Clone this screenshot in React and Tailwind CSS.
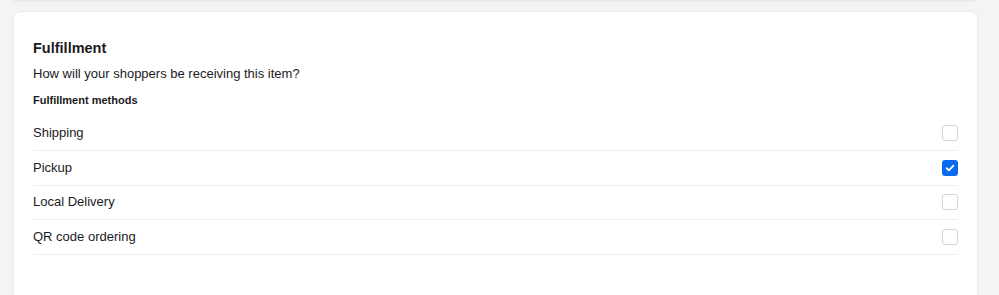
import React from "react";

const rows = [
  { label: "Shipping", checked: false, h: "h-[35px]" },
  { label: "Pickup", checked: true, h: "h-[35px]" },
  { label: "Local Delivery", checked: false, h: "h-[34px]" },
  { label: "QR code ordering", checked: false, h: "h-[35px]" },
];

function Box({ checked }) {
  if (checked) {
    return (
      <div className="w-4 h-4 rounded-[3px] bg-[#0b6bf0] flex items-center justify-center">
        <svg width="10" height="8" viewBox="0 0 10 8" fill="none">
          <path d="M1.6 4.3 L3.9 6.3 L8.4 1.6" stroke="white" strokeWidth="1.8" strokeLinecap="round" strokeLinejoin="round" />
        </svg>
      </div>
    );
  }
  return <div className="w-4 h-4 rounded-[3px] border-[1.5px] border-[#d3d5d8] bg-white" />;
}

export default function App() {
  return (
    <div className="w-[999px] h-[295px] bg-[#f3f4f6] overflow-hidden text-[#1a1b1d]" style={{ fontFamily: "'Liberation Sans', Arial, sans-serif" }}>
      <div className="ml-[14px] w-[961px] h-[2px] bg-[#e9eaec]" />
      <div className="ml-[14px] mt-[10px] w-[963px] h-[300px] bg-white rounded-[6px] shadow-[0_0_2px_rgba(0,0,0,0.12)] pl-[19px] pr-[19px] pt-[27px]">
        <div className="text-[14.5px] font-bold leading-[18px]">Fulfillment</div>
        <div className="mt-[8px] text-[13px] leading-[18px]">How will your shoppers be receiving this item?</div>
        <div className="mt-[9px] text-[11px] font-bold leading-[16px]">Fulfillment methods</div>
        <div className="mt-[8px]">
          {rows.map((r) => (
            <div key={r.label} className={`${r.h} pb-[1px] flex items-center justify-between border-b border-[#eceef0] text-[13px]`}>
              <span>{r.label}</span>
              <Box checked={r.checked} />
            </div>
          ))}
        </div>
      </div>
    </div>
  );
}
